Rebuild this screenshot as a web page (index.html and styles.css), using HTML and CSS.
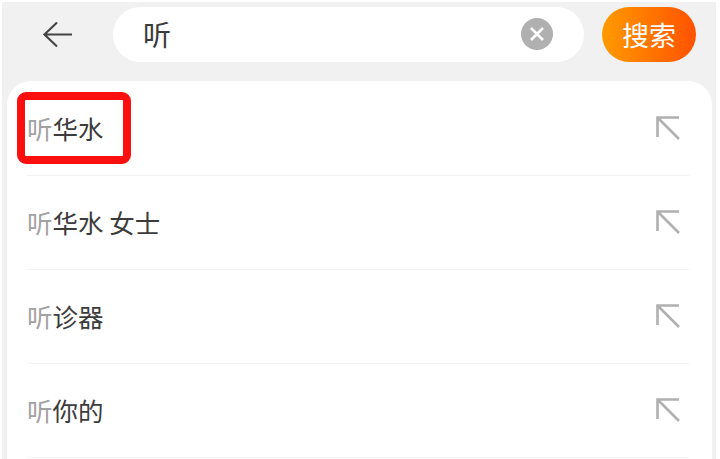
FILE: index.html
```html
<!DOCTYPE html>
<html lang="zh-CN">
<head>
<meta charset="utf-8">
<title>搜索</title>
<link rel="stylesheet" href="styles.css">
</head>
<body>
<div class="page">
  <header class="top">
    <svg class="back" viewBox="0 0 32 30" width="31" height="29"><path d="M31 15H3M15.500 2.500 2.500 15l13 12.500" fill="none" stroke="#444" stroke-width="2.200"/></svg>
    <div class="field">
      <span class="query">听</span>
      <svg class="clear" viewBox="0 0 32 32" width="32" height="32"><circle cx="16" cy="16" r="16" fill="#b0b0b0"/><path d="M10 10 22 22M22 10 10 22" stroke="#fff" stroke-width="2.600"/></svg>
    </div>
    <button class="go">搜索</button>
  </header>
  <main class="card">
    <div class="row"><span class="text"><span class="hit">听</span>华水</span><svg class="up" viewBox="0 0 26 26" width="26" height="26"><path d="M24 24 3 3M2.500 22V2.500H24" fill="none" stroke="#b0b0b0" stroke-width="2.600"/></svg></div>
    <div class="row"><span class="text"><span class="hit">听</span>华水 女士</span><svg class="up" viewBox="0 0 26 26" width="26" height="26"><path d="M24 24 3 3M2.500 22V2.500H24" fill="none" stroke="#b0b0b0" stroke-width="2.600"/></svg></div>
    <div class="row"><span class="text"><span class="hit">听</span>诊器</span><svg class="up" viewBox="0 0 26 26" width="26" height="26"><path d="M24 24 3 3M2.500 22V2.500H24" fill="none" stroke="#b0b0b0" stroke-width="2.600"/></svg></div>
    <div class="row"><span class="text"><span class="hit">听</span>你的</span><svg class="up" viewBox="0 0 26 26" width="26" height="26"><path d="M24 24 3 3M2.500 22V2.500H24" fill="none" stroke="#b0b0b0" stroke-width="2.600"/></svg></div>
    <div class="mark"></div>
  </main>
</div>
</body>
</html>
```
FILE: styles.css
```css
* { box-sizing: border-box; }
html, body { margin: 0; padding: 0; }
body { width: 720px; height: 459px; overflow: hidden; background: #fff; font-family: "Noto Sans CJK SC", "Noto Sans", sans-serif; }
.page { height: 459px; margin: 2px 4px 0 2px; background: #f1f1f2; padding-top: 5px; overflow: hidden; }
.top { display: flex; align-items: center; height: 55px; padding-left: 39px; }
.back { flex: none; margin-left: 1px; margin-top: -1px; }
.field { flex: none; display: flex; align-items: center; justify-content: space-between; width: 471px; height: 55px; margin-left: 40px; padding: 0 31px 0 30px; border-radius: 28px; background: #fff; }
.query { font-size: 28px; line-height: 1; color: #3a3a3a; margin-top: -2px; }
.clear { flex: none; margin-top: -1px; }
.go { flex: none; width: 94px; height: 55px; margin-left: 18px; padding: 0; border: 0; border-radius: 28px; background: linear-gradient(90deg, #ff9a00, #ff5200); color: #fff; font: 27px/1 "Noto Sans CJK SC", sans-serif; }
.card { position: relative; margin: 19px 4px 0 5px; height: 400px; background: #fff; border-radius: 24px 24px 0 0; padding: 1px 23px 0 20px; }
.row { display: flex; align-items: center; justify-content: space-between; height: 94px; border-bottom: 1px solid #f3f3f3; padding-right: 8px; }
.text { font-size: 25.500px; line-height: 1; color: #3c3c3c; margin-top: -2px; }
.hit { color: #a2a2a2; }
.up { flex: none; margin-top: -1px; }
.mark { position: absolute; left: 10px; top: 11px; width: 114px; height: 72px; border: 8px solid #fb0f0f; border-radius: 9px; }
```
